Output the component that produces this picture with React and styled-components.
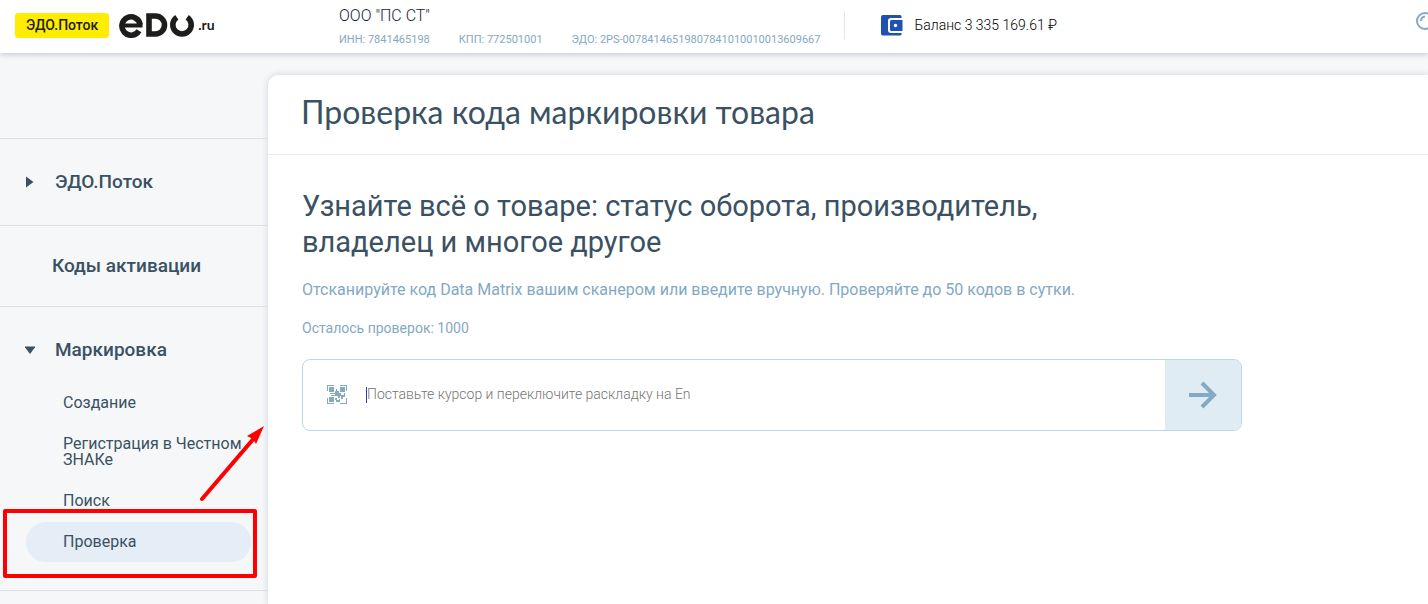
import React from 'react';
import styled, { createGlobalStyle } from 'styled-components';

const GlobalStyle = createGlobalStyle`
  :root {
    --color-text: #3a5163;
    --color-muted: #83a9c3;
    --color-line: #dcdfe4;
    --color-bg: #f5f7f9;
    --color-mark: #ff0000;
  }
  * {
    box-sizing: border-box;
  }
  body {
    margin: 0;
    background: var(--color-bg);
    color: var(--color-text);
    font-family: Roboto, 'Liberation Sans', sans-serif;
    overflow-x: hidden;
  }
  h1,
  h2,
  p,
  ul {
    margin: 0;
    padding: 0;
    font-weight: 400;
  }
  a {
    color: inherit;
    text-decoration: none;
  }
  svg {
    display: block;
    flex-shrink: 0;
  }
`;

const Page = styled.div`
  display: flex;
  flex-direction: column;
  min-height: 100vh;
`;

const Header = styled.header`
  display: flex;
  align-items: center;
  height: 53px;
  padding-left: 15px;
  background: #fff;
  box-shadow: 0 1px 6px rgba(60, 70, 110, 0.3);
  z-index: 1;
`;

const Brand = styled.div`
  display: flex;
  align-items: center;
  gap: 10px;
  width: 324px;
  flex-shrink: 0;
  padding-bottom: 3px;
`;

const ProductLink = styled.a`
  padding: 0 11px;
  border-radius: 3px;
  background: #ffed00;
  color: #1d1d1b;
  font-size: 14px;
  font-weight: 500;
  line-height: 25px;
`;

const LogoLink = styled.a`
  display: flex;
  align-items: center;
  gap: 3px;
  color: #1d1d1b;
  font-family: Lato, sans-serif;
  font-size: 14px;
  font-weight: 700;
  line-height: 20px;
`;

const Company = styled.div`
  display: flex;
  flex-direction: column;
  gap: 7px;
`;

const CompanyName = styled.p`
  color: #1b1b3a;
  font-size: 16px;
  font-weight: 300;
  line-height: 20px;
`;

const Requisites = styled.ul`
  display: flex;
  gap: 29px;
  list-style: none;
  color: var(--color-muted);
  font-size: 11px;
  line-height: 14px;
  white-space: nowrap;
`;

const Balance = styled.div`
  display: flex;
  align-items: center;
  gap: 11px;
  height: 28px;
  margin: 0 0 3px 24px;
  padding-left: 36px;
  border-left: 1px solid #e4e6ea;
  color: #000;
  font-size: 14px;
  font-weight: 300;
  white-space: nowrap;
`;

const SearchSlot = styled.a`
  width: 12px;
  margin: 0 0 11px auto;
  overflow: hidden;
  color: var(--color-muted);
`;

const Body = styled.div`
  display: flex;
  flex: 1;
`;

const Sidebar = styled.nav`
  position: relative;
  width: 268px;
  flex-shrink: 0;
  padding-top: 85px;
`;

const Section = styled.div`
  padding: ${({ $pad }) => $pad || '31px 0'};
  border-top: 1px solid var(--color-line);
`;

const SectionTitle = styled.a`
  display: flex;
  align-items: center;
  gap: 20px;
  padding-left: ${({ $plain }) => ($plain ? '52px' : '25px')};
  font-size: 19px;
  font-weight: 500;
  line-height: 24px;
`;

const SubMenu = styled.ul`
  display: flex;
  flex-direction: column;
  gap: 1px;
  margin: 21px 17px 0 26px;
  list-style: none;
`;

const SubLink = styled.a`
  position: relative;
  display: block;
  padding: 12px 6px 12px 37px;
  border-radius: 20px;
  background: ${({ $active }) => ($active ? '#e5edf6' : 'transparent')};
  font-size: 16px;
  line-height: 16px;
`;

const MarkFrame = styled.span`
  position: absolute;
  inset: -13px -6px -16px -23px;
  border: 4px solid var(--color-mark);
  border-radius: 2px;
`;

const MarkArrow = styled.svg`
  position: absolute;
  top: 370px;
  left: 196px;
`;

const Panel = styled.main`
  flex: 1;
  min-width: 0;
  margin-top: 22px;
  border-top-left-radius: 10px;
  background: #fff;
  box-shadow: 0 0 6px rgba(60, 70, 90, 0.2);
`;

const PanelHead = styled.div`
  padding: 15px 33px 20px;
  border-bottom: 1px solid #e1ebf4;

  h1 {
    font-family: Lato, 'Noto Sans', sans-serif;
    font-size: 32px;
    line-height: 44px;
  }
`;

const PanelBody = styled.div`
  padding: 33px 34px;
`;

const Heading = styled.h2`
  max-width: 760px;
  font-size: 29px;
  line-height: 36px;
`;

const Lead = styled.p`
  margin-top: 20px;
  color: var(--color-muted);
  font-size: 16px;
  line-height: 20px;
`;

const Remaining = styled.p`
  margin-top: 18px;
  color: var(--color-muted);
  font-size: 14px;
  line-height: 20px;
`;

const CodeForm = styled.form`
  display: flex;
  max-width: 940px;
  height: 72px;
  margin-top: 21px;
  border: 1px solid #c1d6e3;
  border-radius: 8px;
  overflow: hidden;
`;

const CodeLabel = styled.label`
  display: flex;
  flex: 1;
  align-items: center;
  gap: 18px;
  padding-left: 24px;
`;

const CodeInput = styled.input`
  flex: 1;
  min-width: 0;
  height: 32px;
  padding: 0 0 2px;
  border: 0;
  outline: 0;
  background: transparent;
  color: var(--color-text);
  font-family: inherit;
  font-size: 14px;
  font-weight: 300;

  &::placeholder {
    color: #757575;
    opacity: 1;
  }
`;

const Caret = styled.span`
  width: 1px;
  height: 16px;
  background: #2b3fb0;
`;

const InputWrap = styled.span`
  display: flex;
  flex: 1;
  align-items: center;
`;

const SubmitButton = styled.button`
  display: flex;
  align-items: center;
  justify-content: center;
  width: 76px;
  padding: 0;
  border: 0;
  background: #dfecf4;
  color: var(--color-muted);
  cursor: pointer;
`;

const Logo = () => (
  <svg width="76" height="26" viewBox="0 0 76 26" fill="none" stroke="#1d1d1b" strokeWidth="5.6">
    <path d="M20 18.8A9.2 9.2 0 1 1 21.2 12.6" />
    <path d="M4 13.500H23.500" strokeWidth="4" />
    <path d="M30 4H36.500A9 9 0 0 1 36.500 22H30Z" />
    <path d="M57.800 5.200A9.200 9.200 0 1 0 68.200 5.200" />
  </svg>
);

const WalletIcon = () => (
  <svg width="22" height="21" viewBox="0 0 22 21">
    <path d="M2 0H19Q20.500 0 20.500 1.500V3H10Q7 3 7 6V15Q7 18 10 18H20.500V19Q20.500 20.500 19 20.500H2Q0 20.500 0 18.500V2Q0 0 2 0Z" fill="#1f51b3" />
    <path d="M10.500 5H21.500V16H10.500Q9 16 9 14.500V6.500Q9 5 10.500 5Z" fill="#1f51b3" />
    <circle cx="14.500" cy="10.500" r="1.700" fill="#fff" />
  </svg>
);

const SearchIcon = () => (
  <svg width="22" height="18" viewBox="0 0 22 18" fill="none" stroke="currentColor" strokeWidth="2">
    <circle cx="9" cy="9" r="8" />
    <path d="M5 9Q5 5 9 4.500" />
  </svg>
);

const MatrixIcon = () => (
  <svg width="21" height="20" viewBox="0 0 21 20" fill="#83a9c3">
    <path d="M0 0H7V1H1V6H0ZM13 0H20V6H19V1H13ZM0 13H1V18H7V19H0ZM19 13H20V19H13V18H19Z" />
    <path d="M2 2H7V7H2ZM13 2H18V7H13ZM2 12H7V17H2Z" />
    <path d="M9 4H10V6H12V8H14V10H17V8H18V12H16V14H14V11H13V13H11V11H4V10H8V9H3V8H8V6H9ZM8 13H10V15H12V14H13V17H9V15H8Z" />
  </svg>
);

const requisites = ['ИНН: 7841465198', 'КПП: 772501001', 'ЭДО: 2PS-00784146519807841010010013609667'];

const markingItems = [
  { name: 'Создание' },
  { name: 'Регистрация в Честном ЗНАКе' },
  { name: 'Поиск' },
  { name: 'Проверка', active: true },
];

export default function App() {
  return (
    <Page>
      <GlobalStyle />
      <Header>
        <Brand>
          <ProductLink href="#potok">ЭДО.Поток</ProductLink>
          <LogoLink href="#home">
            <Logo />
            .ru
          </LogoLink>
        </Brand>
        <Company>
          <CompanyName>ООО "ПС СТ"</CompanyName>
          <Requisites>
            {requisites.map((item) => (
              <li key={item}>{item}</li>
            ))}
          </Requisites>
        </Company>
        <Balance>
          <WalletIcon />
          Баланс 3 335 169.61 ₽
        </Balance>
        <SearchSlot href="#search">
          <SearchIcon />
        </SearchSlot>
      </Header>

      <Body>
        <Sidebar>
          <Section>
            <SectionTitle href="#potok">
              <svg width="10" height="12" viewBox="0 0 10 12" fill="currentColor">
                <path d="M1 0.500L8.500 6L1 11.500Z" />
              </svg>
              ЭДО.Поток
            </SectionTitle>
          </Section>
          <Section $pad="28px 0">
            <SectionTitle href="#codes" $plain>
              Коды активации
            </SectionTitle>
          </Section>
          <Section $pad="31px 0 28px">
            <SectionTitle href="#marking">
              <svg width="10" height="12" viewBox="0 0 10 12" fill="currentColor">
                <path d="M-0.500 2.500H10.500L5 10Z" />
              </svg>
              Маркировка
            </SectionTitle>
            <SubMenu>
              {markingItems.map((item) => (
                <li key={item.name}>
                  <SubLink href="#marking" $active={item.active}>
                    {item.name}
                    {item.active && <MarkFrame />}
                  </SubLink>
                </li>
              ))}
            </SubMenu>
          </Section>
          <Section $pad="0" />
          <MarkArrow width="72" height="82" viewBox="0 0 72 82">
            <path d="M6 76L59 14" stroke="#f00" strokeWidth="4" strokeLinecap="round" />
            <path d="M68 3L60 21L57 16L51 13Z" fill="#f00" />
          </MarkArrow>
        </Sidebar>

        <Panel>
          <PanelHead>
            <h1>Проверка кода маркировки товара</h1>
          </PanelHead>
          <PanelBody>
            <Heading>Узнайте всё о товаре: статус оборота, производитель, владелец и многое другое</Heading>
            <Lead>Отсканируйте код Data Matrix вашим сканером или введите вручную. Проверяйте до 50 кодов в сутки.</Lead>
            <Remaining>Осталось проверок: 1000</Remaining>
            <CodeForm onSubmit={(e) => e.preventDefault()}>
              <CodeLabel htmlFor="code">
                <MatrixIcon />
                <InputWrap>
                  <Caret />
                  <CodeInput id="code" type="text" placeholder="Поставьте курсор и переключите раскладку на En" />
                </InputWrap>
              </CodeLabel>
              <SubmitButton type="submit" aria-label="Проверить">
                <svg width="28" height="28" viewBox="0 0 28 28" fill="none" stroke="currentColor" strokeWidth="4">
                  <path d="M0 14H26M13 2L25 14L13 26" />
                </svg>
              </SubmitButton>
            </CodeForm>
          </PanelBody>
        </Panel>
      </Body>
    </Page>
  );
}
